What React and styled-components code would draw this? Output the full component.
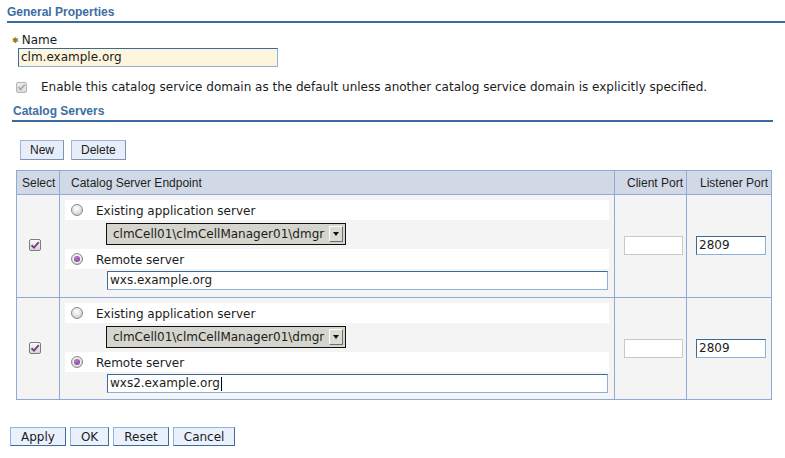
import React from "react";
import styled, { createGlobalStyle, css } from "styled-components";

const GlobalStyle = createGlobalStyle`
	body {
		margin: 0;
		background: #fff;
		font-family: "DejaVu Sans", "Liberation Sans", sans-serif;
		font-size: 12px;
		color: #1c1c1c;
	}
`;

const Page = styled.div`
	width: 785px;
	height: 458px;
	overflow: hidden;
`;

const SectionTitle = styled.h2`
	margin: ${p => p.$top}px ${p => p.$right}px 0 ${p => p.$left}px;
	padding: 0 0 2px ${p => p.$pad}px;
	font: bold 12px/14px "Liberation Sans", Arial, sans-serif;
	color: #3d6ea3;
	border-bottom: 2px solid #3a6a9e;
`;

const LabelRow = styled.div`
	margin: 9px 0 0 12px;
	display: flex;
	align-items: center;
	line-height: 14px;
`;

const Required = styled.span`
	color: #8a7622;
	font-size: 8px;
	margin: 2px 3px 0 0;
`;

const TextBox = styled.div`
	box-sizing: border-box;
	width: ${p => p.$width}px;
	height: 19px;
	padding: 0 2px;
	line-height: 17px;
	white-space: nowrap;
	background: ${p => (p.$required ? "#fdf5dc" : "#fff")};
	border: 1px solid;
	border-color: ${p =>
		p.$plain ? "#c9c9c9" : "#3a6a9c #8cb0da #8cb0da #3a6a9c"};
	display: flex;
	align-items: center;
`;

const Caret = styled.span`
	width: 1px;
	height: 14px;
	background: #000;
	margin-left: 1px;
`;

const NameBox = styled(TextBox)`
	margin-left: 18px;
`;

const CheckRow = styled.div`
	margin: 10px 0 0 16px;
	height: 20px;
	display: flex;
	align-items: center;
`;

const CheckText = styled.span`
	margin-left: 14px;
`;

const Box = styled.span`
	box-sizing: border-box;
	width: ${p => p.$size}px;
	height: ${p => p.$size}px;
	border-radius: 2px;
	border: 1px solid ${p => (p.$disabled ? "#b5b5b5" : "#7c7c7c")};
	background: ${p =>
		p.$disabled
			? "linear-gradient(#ececec, #dcdcdc)"
			: "linear-gradient(#fafafa, #d6d6d6)"};
	display: inline-flex;
	align-items: center;
	justify-content: center;
	flex: none;
`;

const Checkbox = ({ disabled, size = 12 }) => (
	<Box $disabled={disabled} $size={size}>
		<svg width="10" height="10" viewBox="0 0 10 10">
			<path
				d="M1.5 5.2 L4 7.6 L8.8 2.2"
				fill="none"
				stroke={disabled ? "#a9a9a9" : "#7b3f8e"}
				strokeWidth="2"
			/>
		</svg>
	</Box>
);

const Radio = styled.span`
	box-sizing: border-box;
	position: relative;
	width: 12px;
	height: 12px;
	border-radius: 50%;
	border: 1px solid #8a8a8a;
	background: radial-gradient(circle at 45% 35%, #ffffff 0%, #e6e6e6 45%, #b9b9b9 100%);
	flex: none;
	${p =>
		p.$checked &&
		css`
			&::after {
				content: "";
				position: absolute;
				left: 2px;
				top: 2px;
				width: 6px;
				height: 6px;
				border-radius: 50%;
				background: radial-gradient(circle at 40% 35%, #b57ac4, #7d3c8f);
				box-shadow: 0 0 0 1px #f2eef4;
			}
		`}
`;

const ButtonBar = styled.div`
	display: flex;
	gap: ${p => p.$gap}px;
	margin: ${p => p.$top}px 0 0 ${p => p.$left}px;
`;

const Button = styled.button`
	box-sizing: border-box;
	height: ${p => (p.$primary ? 19 : 20)}px;
	padding: 0 ${p => (p.$primary ? 10 : 9)}px;
	font: 12px ${p =>
		p.$primary ? `"DejaVu Sans", sans-serif` : `"Liberation Sans", Arial, sans-serif`};
	color: #1c1c1c;
	background: ${p => (p.$primary ? "#eaf1fc" : "#e7eef9")};
	border: 1px solid;
	border-color: ${p =>
		p.$primary ? "#8fb4e2 #3b6c9e #3b6c9e #8fb4e2" : "#a2b6d1 #7b93b6 #7b93b6 #a2b6d1"};
	cursor: pointer;
`;

const Grid = styled.table`
	margin: 10px 0 0 16px;
	width: 756px;
	table-layout: fixed;
	border-collapse: separate;
	border-spacing: 0;
	border-top: 1px solid #8eaad9;
	border-left: 1px solid #8eaad9;
`;

const HeadCell = styled.th`
	box-sizing: border-box;
	width: ${p => p.$width}px;
	height: 24px;
	padding: 0 ${p => (p.$right ? 3 : 0)}px 0 ${p => p.$indent || 0}px;
	text-align: ${p => (p.$right ? "right" : "left")};
	font: normal 12px/14px "Liberation Sans", Arial, sans-serif;
	color: #1e1e1e;
	white-space: nowrap;
	overflow: hidden;
	background: #d1d9e7;
	border-right: 1px solid #8eaad9;
	border-bottom: 1px solid #8eaad9;
`;

const Cell = styled.td`
	box-sizing: border-box;
	padding: 5px 5px ${p => p.$bottom}px ${p => p.$indent}px;
	vertical-align: middle;
	background: #f4f4f4;
	border-right: 1px solid #8eaad9;
	border-bottom: 1px solid #8eaad9;
`;

const Choice = styled.div`
	height: 20px;
	padding-left: 6px;
	background: #fff;
	display: flex;
	align-items: center;
`;

const ChoiceLabel = styled.span`
	margin: 2px 0 0 13px;
	line-height: 14px;
`;

const SelectRow = styled.div`
	box-sizing: border-box;
	height: 29px;
	padding: 3px 0 0 41px;
`;

const Dropdown = styled.div`
	box-sizing: border-box;
	width: 240px;
	height: 22px;
	padding: 0 2px 0 6px;
	border: 1px solid #111;
	background: #d5d5cd;
	display: flex;
	align-items: center;
	justify-content: space-between;
`;

const DropArrow = styled.span`
	box-sizing: border-box;
	width: 14px;
	height: 16px;
	background: #dcdcd5;
	border: 1px solid;
	border-color: #ffffff #6e6e6e #6e6e6e #ffffff;
	display: flex;
	align-items: center;
	justify-content: center;
`;

const FieldRow = styled.div`
	box-sizing: border-box;
	height: 22px;
	padding: 2px 0 0 42px;
`;

const servers = [
	{ host: "wxs.example.org", port: "2809", bottom: 6 },
	{ host: "wxs2.example.org", port: "2809", bottom: 5, focused: true }
];

const ServerRow = ({ host, port, focused, bottom }) => (
	<tr>
		<Cell $indent={12} $bottom={bottom}>
			<Checkbox />
		</Cell>
		<Cell $indent={5} $bottom={bottom}>
			<Choice>
				<Radio />
				<ChoiceLabel>Existing application server</ChoiceLabel>
			</Choice>
			<SelectRow>
				<Dropdown>
					<span>{"clmCell01\\clmCellManager01\\dmgr"}</span>
					<DropArrow>
						<svg width="6" height="4" viewBox="0 0 6 4">
							<polygon points="0,0 6,0 3,4" fill="#111" />
						</svg>
					</DropArrow>
				</Dropdown>
			</SelectRow>
			<Choice>
				<Radio $checked />
				<ChoiceLabel>Remote server</ChoiceLabel>
			</Choice>
			<FieldRow>
				<TextBox $width={501}>
					{host}
					{focused && <Caret />}
				</TextBox>
			</FieldRow>
		</Cell>
		<Cell $indent={9} $bottom={bottom}>
			<TextBox $width={59} $plain />
		</Cell>
		<Cell $indent={9} $bottom={bottom}>
			<TextBox $width={70}>{port}</TextBox>
		</Cell>
	</tr>
);

const App = () => (
	<Page>
		<GlobalStyle />
		<SectionTitle $top={5} $left={7} $right={0} $pad={0}>
			General Properties
		</SectionTitle>

		<LabelRow>
			<Required>✱</Required>
			Name
		</LabelRow>
		<NameBox $width={260} $required>
			clm.example.org
		</NameBox>

		<CheckRow>
			<Checkbox disabled size={11} />
			<CheckText>
				Enable this catalog service domain as the default unless another catalog
				service domain is explicitly specified.
			</CheckText>
		</CheckRow>

		<SectionTitle $top={7} $left={12} $right={12} $pad={1}>
			Catalog Servers
		</SectionTitle>

		<ButtonBar $top={18} $left={20} $gap={7}>
			<Button>New</Button>
			<Button>Delete</Button>
		</ButtonBar>

		<Grid>
			<thead>
				<tr>
					<HeadCell $width={43} $indent={5}>
						Select
					</HeadCell>
					<HeadCell $width={555} $indent={11}>
						Catalog Server Endpoint
					</HeadCell>
					<HeadCell $width={72} $right>
						Client Port
					</HeadCell>
					<HeadCell $width={85} $right>
						Listener Port
					</HeadCell>
				</tr>
			</thead>
			<tbody>
				{servers.map(s => (
					<ServerRow key={s.host} {...s} />
				))}
			</tbody>
		</Grid>

		<ButtonBar $top={27} $left={10} $gap={4}>
			<Button $primary>Apply</Button>
			<Button $primary>OK</Button>
			<Button $primary>Reset</Button>
			<Button $primary>Cancel</Button>
		</ButtonBar>
	</Page>
);

export default App;
